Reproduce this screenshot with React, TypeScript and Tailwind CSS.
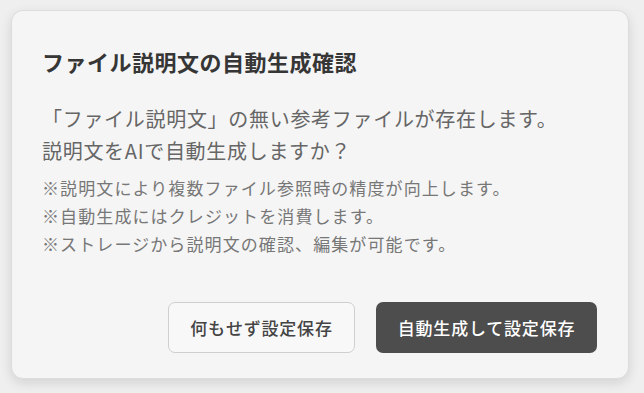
import React from "react";

export default function App() {
  const jp = { fontFamily: '"Noto Sans CJK JP", "Noto Sans", sans-serif' };
  return (
    <div className="w-[644px] h-[393px] bg-[#efefef] pt-[10px] pl-[11px]" style={jp}>
      <div className="w-[618px] h-[369px] rounded-[12px] border border-[#dcdcdc] bg-[#f5f5f5] shadow-[0_4px_12px_rgba(0,0,0,0.12)] flex flex-col pl-[30px] pr-[31px] pt-[34px] pb-[25px]">
        <h1 className="text-[22px] leading-[32px] font-bold text-[#363636] tracking-[0.5px]">
          ファイル説明文の自動生成確認
        </h1>
        <div className="mt-[26px] text-[20px] leading-[32px] text-[#666666] tracking-[0.7px]">
          <p>「ファイル説明文」の無い参考ファイルが存在します。</p>
          <p>説明文をAIで自動生成しますか？</p>
        </div>
        <div className="mt-[7px] text-[17px] leading-[28px] text-[#777777] tracking-[1.1px]">
          <p>※説明文により複数ファイル参照時の精度が向上します。</p>
          <p>※自動生成にはクレジットを消費します。</p>
          <p>※ストレージから説明文の確認、編集が可能です。</p>
        </div>
        <div className="mt-auto flex justify-end gap-[21px]">
          <button className="w-[187px] h-[51px] rounded-[7px] border border-[#cfcfcf] bg-[#f8f8f8] text-[17px] font-medium text-[#444444] tracking-[0.8px]">
            何もせず設定保存
          </button>
          <button className="w-[221px] h-[51px] rounded-[7px] bg-[#4d4d4d] text-[17px] font-medium text-white tracking-[0.8px]">
            自動生成して設定保存
          </button>
        </div>
      </div>
    </div>
  );
}
